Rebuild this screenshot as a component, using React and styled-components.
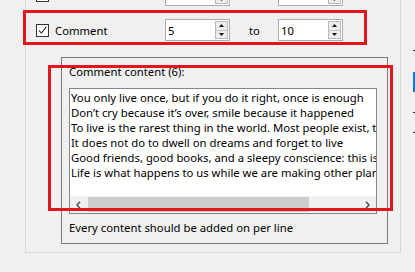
import styled, { createGlobalStyle } from "styled-components";

const GlobalStyle = createGlobalStyle`
  html, body {
    margin: 0;
    padding: 0;
    background: #f0f0f0;
  }
  body {
    font-family: "Noto Sans", "Open Sans", sans-serif;
    font-size: 11.3px;
    line-height: 15px;
    color: #000;
    overflow: hidden;
  }
`;

const Page = styled.div`
  width: 415px;
  height: 272px;
  overflow: hidden;
  display: flex;
`;

const Main = styled.div`
  width: 413px;
  flex: none;
`;

const EdgeStrip = styled.div`
  flex: 1;
  display: flex;
  flex-direction: column;
  padding-top: 50px;
`;

const EdgeMark = styled.div`
  height: ${(p) => p.$h}px;
  margin-bottom: ${(p) => p.$gap}px;
  background: ${(p) => p.$color};
`;

const OuterGroup = styled.div`
  box-sizing: border-box;
  width: 376px;
  margin: -22px 0 0 25px;
  padding: 6px 0 8px;
  border: 1px solid #d9d9d9;
  border-top: none;
`;

const Row = styled.div`
  position: relative;
  display: flex;
  align-items: center;
  height: 22px;
  padding-left: 10px;
  margin-top: ${(p) => p.$offset || 0}px;

  ${(p) =>
    p.$highlight &&
    `
    &::after {
      content: "";
      position: absolute;
      left: -3px;
      top: -9px;
      width: 344px;
      height: 35px;
      box-sizing: border-box;
      border: 3px solid #e3141c;
    }
  `}
`;

const CheckCell = styled.label`
  display: flex;
  align-items: center;
  gap: 6px;
  width: 129px;
  flex: none;
`;

const Box = styled.span`
  display: inline-flex;
  box-sizing: border-box;
  width: 13px;
  height: 13px;
  border: 1px solid #333;
  background: #fff;
`;

const SpinBox = styled.div`
  box-sizing: border-box;
  width: 65px;
  height: 22px;
  flex: none;
  display: flex;
  align-items: center;
  padding-left: 2px;
  border: 1px solid #acacac;
  background: #fff;
`;

const SpinValue = styled.span`
  flex: 1;
`;

const SpinButtons = styled.div`
  box-sizing: border-box;
  width: 13px;
  height: 18px;
  margin-right: 1px;
  display: flex;
  flex-direction: column;
  border: 1px solid #b9b9b9;
  background: #ececec;
`;

const SpinHalf = styled.div`
  flex: 1;
  display: flex;
  align-items: center;
  justify-content: center;
  & + & {
    border-top: 1px solid #c8c8c8;
  }
`;

const ToCell = styled.span`
  width: 48px;
  flex: none;
  padding-left: 19px;
  box-sizing: border-box;
`;

const InnerGroup = styled.div`
  position: relative;
  box-sizing: border-box;
  width: 327px;
  margin: 16px 0 0 35px;
  padding: 6px 10px 8px 7px;
  border: 1px solid #7a7a7a;

  &::after {
    content: "";
    position: absolute;
    left: -14px;
    top: 7px;
    width: 345px;
    height: 146px;
    box-sizing: border-box;
    border: 3px solid #e3141c;
  }
`;

const GroupLabel = styled.div`
  margin-bottom: 9px;
`;

const TextBox = styled.div`
  box-sizing: border-box;
  height: 126px;
  display: flex;
  flex-direction: column;
  border: 1px solid #828790;
  background: #fff;
`;

const Lines = styled.div`
  flex: 1;
  overflow: hidden;
  white-space: pre;
  padding: 1px 0 0 1px;
`;

const HScroll = styled.div`
  flex: none;
  height: 17px;
  display: flex;
  background: #f0f0f0;
`;

const ScrollArrow = styled.div`
  width: 17px;
  display: flex;
  align-items: center;
  justify-content: center;
  margin-left: ${(p) => (p.$end ? "auto" : "0")};
`;

const Thumb = styled.div`
  width: 221px;
  margin: 1px 0 1px 1px;
  background: #cdcdcd;
`;

const Hint = styled.div`
  margin-top: 6px;
`;

const lines = [
  "You only live once, but if you do it right, once is enough",
  "Don\u2019t cry because it\u2019s over, smile because it happened",
  "To live is the rarest thing in the world. Most people exist, that is all.",
  "It does not do to dwell on dreams and forget to live",
  "Good friends, good books, and a sleepy conscience: this is the ideal life.",
  "Life is what happens to us while we are making other plans.",
];

const Checkbox = ({ checked }) => (
  <Box>
    {checked && (
      <svg width="11" height="11" viewBox="0 0 11 11">
        <path d="M2 5.5 L4.3 8 L9.2 2.2" fill="none" stroke="#222" strokeWidth="1.1" />
      </svg>
    )}
  </Box>
);

const Triangle = ({ down }) => (
  <svg width="5" height="3" viewBox="0 0 5 3">
    <path d={down ? "M0 0 H5 L2.5 3 Z" : "M0 3 H5 L2.5 0 Z"} fill="#111" />
  </svg>
);

const Spin = ({ value }) => (
  <SpinBox>
    <SpinValue>{value}</SpinValue>
    <SpinButtons>
      <SpinHalf>
        <Triangle />
      </SpinHalf>
      <SpinHalf>
        <Triangle down />
      </SpinHalf>
    </SpinButtons>
  </SpinBox>
);

const Chevron = ({ right }) => (
  <svg width="5" height="8" viewBox="0 0 5 8">
    <path
      d={right ? "M1 0.8 L4 4 L1 7.2" : "M4 0.8 L1 4 L4 7.2"}
      fill="none"
      stroke="#555"
      strokeWidth="1.6"
    />
  </svg>
);

export default function App() {
  return (
    <>
      <GlobalStyle />
      <Page>
        <Main>
          <OuterGroup>
            <Row>
              <CheckCell>
                <Checkbox />
                Share to feed
              </CheckCell>
              <Spin value="" />
              <ToCell />
              <Spin value="" />
            </Row>
            <Row $offset={13} $highlight>
              <CheckCell>
                <Checkbox checked />
                Comment
              </CheckCell>
              <Spin value="5" />
              <ToCell>to</ToCell>
              <Spin value="10" />
            </Row>
            <InnerGroup>
              <GroupLabel>Comment content (6):</GroupLabel>
              <TextBox>
                <Lines>{lines.join("\n")}</Lines>
                <HScroll>
                  <ScrollArrow>
                    <Chevron />
                  </ScrollArrow>
                  <Thumb />
                  <ScrollArrow $end>
                    <Chevron right />
                  </ScrollArrow>
                </HScroll>
              </TextBox>
              <Hint>Every content should be added on per line</Hint>
            </InnerGroup>
          </OuterGroup>
        </Main>
        <EdgeStrip>
          <EdgeMark $h={1} $gap={21} $color="#333" />
          <EdgeMark $h={20} $gap={20} $color="#0078d7" />
          <EdgeMark $h={1} $gap={19} $color="#333" />
          <EdgeMark $h={1} $gap={0} $color="#333" />
        </EdgeStrip>
      </Page>
    </>
  );
}
